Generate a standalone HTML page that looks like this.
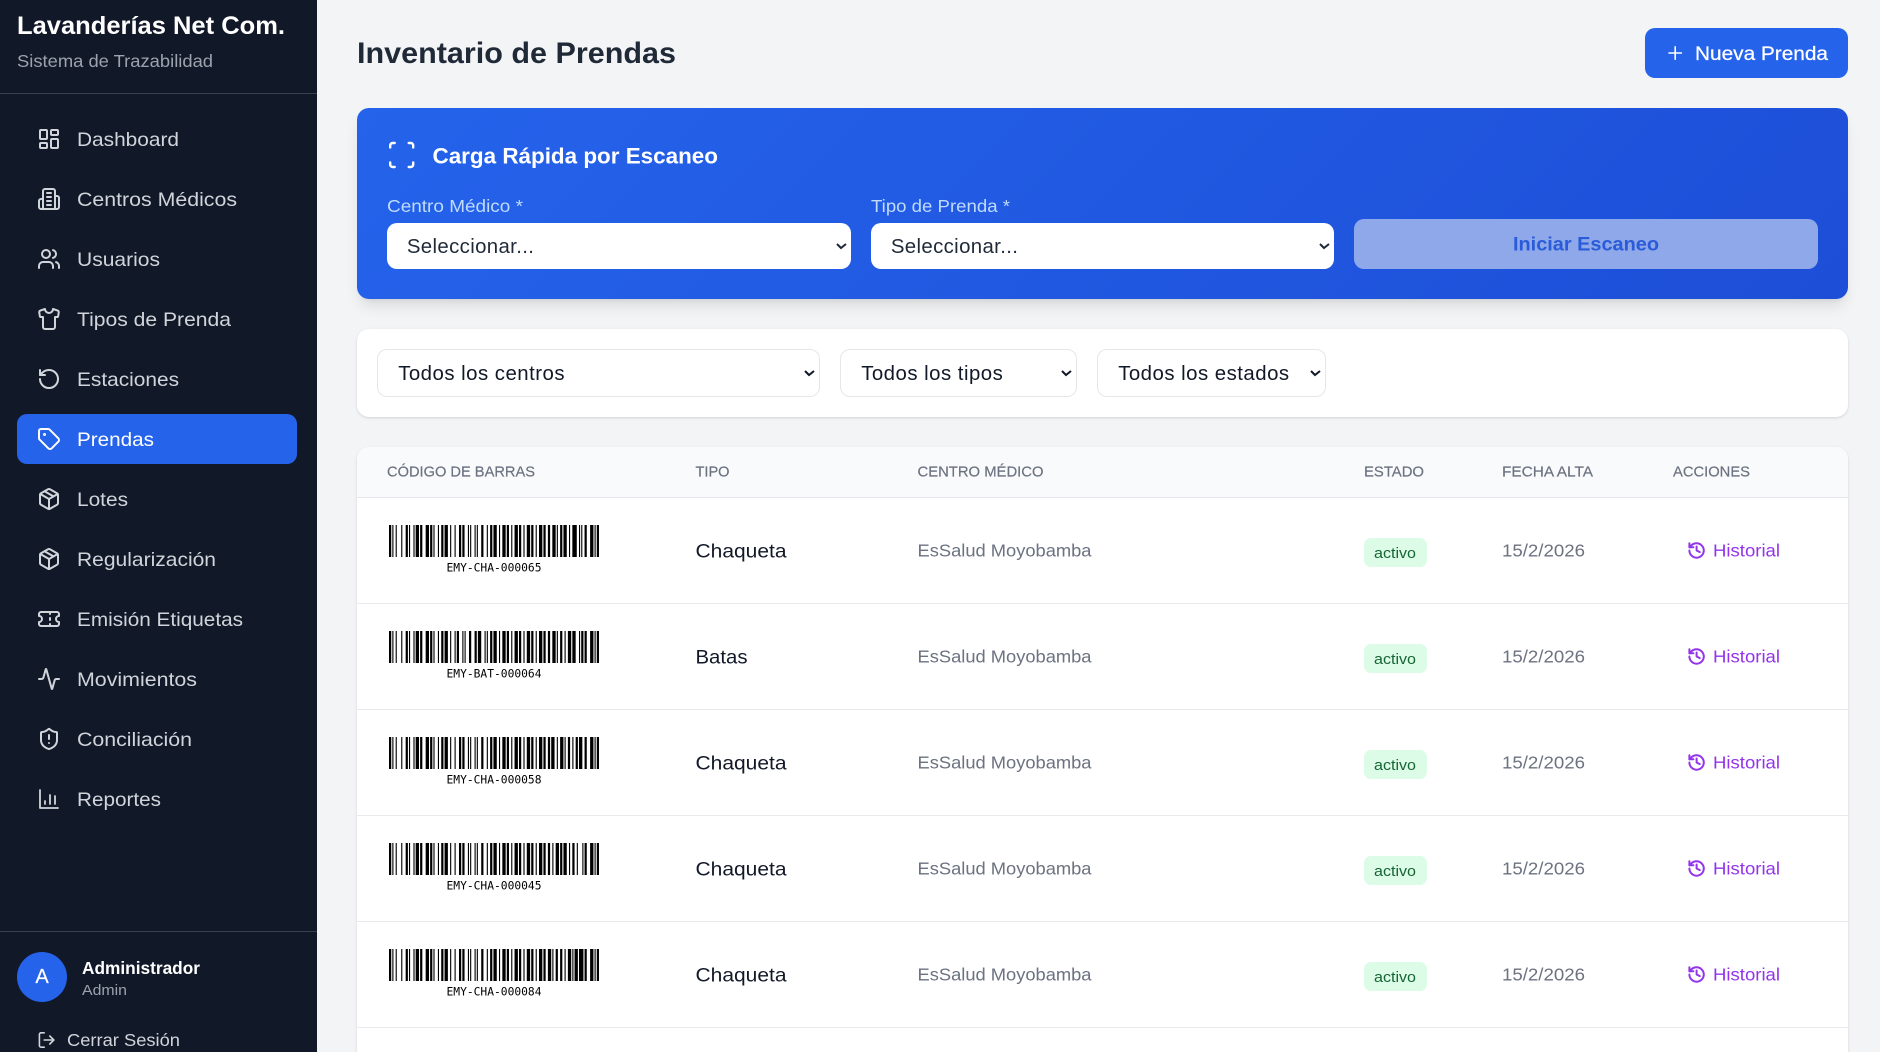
<!DOCTYPE html>
<html lang="es">
<head>
<meta charset="utf-8">
<title>Inventario de Prendas</title>
<style>
html,body{margin:0;padding:0;width:1880px;height:1052px;overflow:hidden}
body{background:#f3f4f6;font-family:"Liberation Sans",sans-serif}
#root{position:relative;width:1880px;height:1052px;overflow:hidden;background:#f3f4f6}
.b{position:absolute;box-sizing:border-box}
select{position:absolute;box-sizing:border-box;background-color:#fff;font-family:"Liberation Sans",sans-serif;font-size:17px;margin:0;zoom:1.2}
.s1{border:0;border-radius:8.33px;height:38.33px;top:185.83px;padding:1px 0 0 13.2px;color:#1f2937;letter-spacing:.3px}
.s2{border:1px solid #e5e7eb;border-radius:8.33px;height:40px;top:290.83px;padding:1px 0 0 13.5px;color:#111827;letter-spacing:.4px}
svg.o{position:absolute;left:0;top:0}
text{font-family:"Liberation Sans",sans-serif}
.n{font-size:19.8px;fill:#d1d5db}
.i{fill:none;stroke:#d1d5db;stroke-width:2;stroke-linecap:round;stroke-linejoin:round}
.th{font-size:15px;fill:#6b7280;stroke:#6b7280;stroke-width:.2}
.ty{font-size:19.8px;fill:#111827}
.ce{font-size:17.4px;fill:#6b7280}
.ac{font-size:15px;fill:#166534}
.hi{font-size:17.4px;fill:#9333ea}
.bc{font-family:"DejaVu Sans Mono",monospace;font-size:11.3px;fill:#000}
.h{fill:none;stroke:#9333ea;stroke-width:2.5;stroke-linecap:round;stroke-linejoin:round}
</style>
</head>
<body>
<div id="root">
<div class="b" style="left:0;top:0;width:317px;height:1052px;background:#111827"></div>
<div class="b" style="left:0;top:93px;width:317px;height:1px;background:#374151"></div>
<div class="b" style="left:0;top:931px;width:317px;height:1px;background:#374151"></div>
<div class="b" style="left:17px;top:414px;width:280px;height:50px;background:#2563eb;border-radius:10px"></div>
<div class="b" style="left:17px;top:952px;width:50px;height:50px;background:#2563eb;border-radius:50%"></div>

<div class="b" style="left:1645px;top:28px;width:203px;height:50px;background:#2563eb;border-radius:10px"></div>
<div class="b" style="left:357px;top:108px;width:1491px;height:191px;background:linear-gradient(135deg,#2563eb,#1d4ed8);border-radius:12px;box-shadow:0 10px 15px -3px rgba(0,0,0,.1),0 4px 6px -4px rgba(0,0,0,.1)"></div>
<select class="s1" style="left:322.5px;width:386.67px"><option>Seleccionar...</option></select>
<select class="s1" style="left:725.83px;width:385.83px"><option>Seleccionar...</option></select>
<div class="b" style="left:1354px;top:219px;width:464px;height:50px;background:#8fa8ea;border-radius:10px"></div>

<div class="b" style="left:357px;top:329px;width:1491px;height:88px;background:#fff;border-radius:12px;box-shadow:0 1px 3px rgba(0,0,0,.1),0 1px 2px -1px rgba(0,0,0,.1)"></div>
<select class="s2" style="left:314.17px;width:369.17px"><option>Todos los centros</option></select>
<select class="s2" style="left:700px;width:197.5px"><option>Todos los tipos</option></select>
<select class="s2" style="left:914.17px;width:190.83px"><option>Todos los estados</option></select>

<div class="b" style="left:357px;top:447px;width:1491px;height:640px;background:#fff;border-radius:12px;box-shadow:0 1px 3px rgba(0,0,0,.1),0 1px 2px -1px rgba(0,0,0,.1);overflow:hidden">
  <div class="b" style="left:0;top:0;width:100%;height:51px;background:#f9fafb;border-bottom:1.2px solid #e5e7eb"></div>
  <div class="b" style="left:0;top:156px;width:100%;height:1px;background:#e8eaed"></div>
  <div class="b" style="left:0;top:262px;width:100%;height:1px;background:#e8eaed"></div>
  <div class="b" style="left:0;top:368px;width:100%;height:1px;background:#e8eaed"></div>
  <div class="b" style="left:0;top:474px;width:100%;height:1px;background:#e8eaed"></div>
  <div class="b" style="left:0;top:580px;width:100%;height:1px;background:#e8eaed"></div>
</div>
<div class="b" style="left:1364px;top:538px;width:63px;height:29px;background:#dcfce7;border-radius:7px"></div>
<div class="b" style="left:1364px;top:644px;width:63px;height:29px;background:#dcfce7;border-radius:7px"></div>
<div class="b" style="left:1364px;top:750px;width:63px;height:29px;background:#dcfce7;border-radius:7px"></div>
<div class="b" style="left:1364px;top:856px;width:63px;height:29px;background:#dcfce7;border-radius:7px"></div>
<div class="b" style="left:1364px;top:962px;width:63px;height:29px;background:#dcfce7;border-radius:7px"></div>

<svg class="o" width="1880" height="1052" viewBox="0 0 1880 1052" style="pointer-events:none">
<defs>
<g id="history"><path class="h" d="M3 12a9 9 0 1 0 9-9 9.75 9.75 0 0 0-6.74 2.74L3 8"/><path class="h" d="M3 3v5h5"/><path class="h" d="M12 7v5l4 2"/></g>
<g id="package"><path d="M11 21.73a2 2 0 0 0 2 0l7-4A2 2 0 0 0 21 16V8a2 2 0 0 0-1-1.73l-7-4a2 2 0 0 0-2 0l-7 4A2 2 0 0 0 3 8v8a2 2 0 0 0 1 1.73z"/><path d="M12 22V12"/><path d="m3.3 7 8.7 5 8.7-5"/><path d="m7.5 4.27 9 5.15"/></g>
</defs>

<text x="17" y="34" font-size="25" font-weight="700" fill="#fff" textLength="268" lengthAdjust="spacingAndGlyphs">Lavanderías Net Com.</text>
<text x="17" y="67" font-size="17.3" fill="#9ca3af" textLength="196" lengthAdjust="spacingAndGlyphs">Sistema de Trazabilidad</text>

<g class="i" transform="translate(37 127)"><rect x="3" y="3" width="7" height="9" rx="1"/><rect x="14" y="3" width="7" height="5" rx="1"/><rect x="14" y="12" width="7" height="9" rx="1"/><rect x="3" y="16" width="7" height="5" rx="1"/></g>
<text class="n" x="77" y="146" textLength="102" lengthAdjust="spacingAndGlyphs">Dashboard</text>
<g class="i" transform="translate(37 187)"><path d="M6 22V4a2 2 0 0 1 2-2h8a2 2 0 0 1 2 2v18Z"/><path d="M6 12H4a2 2 0 0 0-2 2v6a2 2 0 0 0 2 2h2"/><path d="M18 9h2a2 2 0 0 1 2 2v9a2 2 0 0 1-2 2h-2"/><path d="M10 6h4"/><path d="M10 10h4"/><path d="M10 14h4"/><path d="M10 18h4"/></g>
<text class="n" x="77" y="206" textLength="160" lengthAdjust="spacingAndGlyphs">Centros Médicos</text>
<g class="i" transform="translate(37 247)"><path d="M16 21v-2a4 4 0 0 0-4-4H6a4 4 0 0 0-4 4v2"/><circle cx="9" cy="7" r="4"/><path d="M22 21v-2a4 4 0 0 0-3-3.87"/><path d="M16 3.13a4 4 0 0 1 0 7.75"/></g>
<text class="n" x="77" y="266" textLength="83" lengthAdjust="spacingAndGlyphs">Usuarios</text>
<g class="i" transform="translate(37 307)"><path d="M20.38 3.46 16 2a4 4 0 0 1-8 0L3.62 3.46a2 2 0 0 0-1.34 2.23l.58 3.47a1 1 0 0 0 .99.84H6v10c0 1.1.9 2 2 2h8a2 2 0 0 0 2-2V10h2.15a1 1 0 0 0 .99-.84l.58-3.47a2 2 0 0 0-1.34-2.23z"/></g>
<text class="n" x="77" y="326" textLength="154" lengthAdjust="spacingAndGlyphs">Tipos de Prenda</text>
<g class="i" transform="translate(37 367)"><path d="M3 12a9 9 0 1 0 9-9 9.75 9.75 0 0 0-6.74 2.74L3 8"/><path d="M3 3v5h5"/></g>
<text class="n" x="77" y="386" textLength="102" lengthAdjust="spacingAndGlyphs">Estaciones</text>
<g class="i" style="stroke:#fff" transform="translate(37 427)"><path d="M12.586 2.586A2 2 0 0 0 11.172 2H4a2 2 0 0 0-2 2v7.172a2 2 0 0 0 .586 1.414l8.704 8.704a2.426 2.426 0 0 0 3.42 0l6.58-6.58a2.426 2.426 0 0 0 0-3.42z"/><circle cx="7.5" cy="7.5" r=".5" fill="#fff"/></g>
<text class="n" style="fill:#fff" x="77" y="446" textLength="77" lengthAdjust="spacingAndGlyphs">Prendas</text>
<use href="#package" class="i" transform="translate(37 487)"/>
<text class="n" x="77" y="506" textLength="51" lengthAdjust="spacingAndGlyphs">Lotes</text>
<use href="#package" class="i" transform="translate(37 547)"/>
<text class="n" x="77" y="566" textLength="139" lengthAdjust="spacingAndGlyphs">Regularización</text>
<g class="i" transform="translate(37 607)"><path d="M2 9a3 3 0 0 1 0 6v2a2 2 0 0 0 2 2h16a2 2 0 0 0 2-2v-2a3 3 0 0 1 0-6V7a2 2 0 0 0-2-2H4a2 2 0 0 0-2 2Z"/><path d="M13 5v2"/><path d="M13 17v2"/><path d="M13 11v2"/></g>
<text class="n" x="77" y="626" textLength="166" lengthAdjust="spacingAndGlyphs">Emisión Etiquetas</text>
<g class="i" transform="translate(37 667)"><path d="M22 12h-2.48a2 2 0 0 0-1.93 1.46l-2.35 8.36a.25.25 0 0 1-.48 0L9.24 2.18a.25.25 0 0 0-.48 0l-2.35 8.36A2 2 0 0 1 4.49 12H2"/></g>
<text class="n" x="77" y="686" textLength="120" lengthAdjust="spacingAndGlyphs">Movimientos</text>
<g class="i" transform="translate(37 727)"><path d="M20 13c0 5-3.5 7.5-7.66 8.95a1 1 0 0 1-.67-.01C7.5 20.5 4 18 4 13V6a1 1 0 0 1 1-1c2 0 4.5-1.2 6.24-2.72a1.17 1.17 0 0 1 1.52 0C14.51 3.81 17 5 19 5a1 1 0 0 1 1 1z"/><path d="M12 8v4"/><path d="M12 16h.01"/></g>
<text class="n" x="77" y="746" textLength="115" lengthAdjust="spacingAndGlyphs">Conciliación</text>
<g class="i" style="stroke-width:1.8" transform="translate(37 787)"><path d="M3 3v18h18"/><path d="M8 17v-3"/><path d="M13 17V8"/><path d="M18 17V9"/></g>
<text class="n" x="77" y="806" textLength="84" lengthAdjust="spacingAndGlyphs">Reportes</text>

<text x="42" y="983" text-anchor="middle" font-size="20" fill="#fff" stroke="#fff" stroke-width=".2">A</text>
<text x="82" y="974" font-size="17.4" font-weight="700" fill="#fff" textLength="118" lengthAdjust="spacingAndGlyphs">Administrador</text>
<text x="82" y="995" font-size="15" fill="#9ca3af" textLength="45" lengthAdjust="spacingAndGlyphs">Admin</text>
<g class="i" transform="translate(37 1030.4) scale(.8)"><path d="M9 21H5a2 2 0 0 1-2-2V5a2 2 0 0 1 2-2h4"/><path d="m16 17 5-5-5-5"/><path d="M21 12H9"/></g>
<text x="67" y="1046" font-size="17.4" fill="#d1d5db" textLength="113" lengthAdjust="spacingAndGlyphs">Cerrar Sesión</text>

<text x="357" y="63" font-size="29.5" font-weight="700" fill="#1f2937" textLength="319" lengthAdjust="spacingAndGlyphs">Inventario de Prendas</text>
<g fill="none" stroke="#fff" stroke-width="1.6" stroke-linecap="round"><path d="M1669 53h12.4"/><path d="M1675.2 46.8v12.4"/></g>
<text x="1695" y="60" font-size="19.8" fill="#fff" stroke="#fff" stroke-width=".25" textLength="133" lengthAdjust="spacingAndGlyphs">Nueva Prenda</text>

<g fill="none" stroke="#fff" stroke-width="2.4" stroke-linecap="round" stroke-linejoin="round"><path d="M390.2 147.5v-2.1a2.4 2.4 0 0 1 2.4-2.4h2.1"/><path d="M408.7 143h2.1a2.4 2.4 0 0 1 2.4 2.4v2.1"/><path d="M413.2 162.5v2.1a2.4 2.4 0 0 1-2.4 2.4h-2.1"/><path d="M394.7 167h-2.1a2.4 2.4 0 0 1-2.4-2.4v-2.1"/></g>
<text x="432.5" y="163.5" font-size="22.4" font-weight="700" fill="#fff" textLength="285.5" lengthAdjust="spacingAndGlyphs">Carga Rápida por Escaneo</text>
<text x="387" y="212" font-size="17.4" fill="#bfdbfe" textLength="136" lengthAdjust="spacingAndGlyphs">Centro Médico *</text>
<text x="871" y="212" font-size="17.4" fill="#bfdbfe" textLength="139" lengthAdjust="spacingAndGlyphs">Tipo de Prenda *</text>
<text x="1513" y="250.5" font-size="19.8" font-weight="700" fill="#2a5bd8" textLength="146" lengthAdjust="spacingAndGlyphs">Iniciar Escaneo</text>

<text class="th" x="387" y="476.5" textLength="148" lengthAdjust="spacingAndGlyphs">CÓDIGO DE BARRAS</text>
<text class="th" x="695.5" y="476.5" textLength="34" lengthAdjust="spacingAndGlyphs">TIPO</text>
<text class="th" x="917.5" y="476.5" textLength="126" lengthAdjust="spacingAndGlyphs">CENTRO MÉDICO</text>
<text class="th" x="1364" y="476.5" textLength="60" lengthAdjust="spacingAndGlyphs">ESTADO</text>
<text class="th" x="1502" y="476.5" textLength="91" lengthAdjust="spacingAndGlyphs">FECHA ALTA</text>
<text class="th" x="1673" y="476.5" textLength="77" lengthAdjust="spacingAndGlyphs">ACCIONES</text>

<!-- Row 1 -->
<g transform="translate(389 525) scale(1.1111 32)"><line x1="0" y1=".5" x2="189" y2=".5" stroke="#000" stroke-width="1" stroke-dasharray="2 1 1 2 1 4 1 3 2 1 1 3 1 1 3 1 2 3 3 1 2 1 1 3 1 2 2 1 3 2 1 3 1 3 2 1 2 3 1 1 1 3 1 1 1 3 2 3 1 2 2 1 3 2 1 2 3 1 2 2 1 2 3 1 2 2 1 2 3 1 2 2 1 2 3 1 2 2 2 2 3 1 1 2 2 1 3 2 1 2 4 2 1 1 1 2 2 3 3 1 1 1 2"/></g>
<text class="bc" x="446.5" y="571.5" textLength="95" lengthAdjust="spacingAndGlyphs">EMY-CHA-000065</text>
<text class="ty" x="695.5" y="557.5" textLength="91" lengthAdjust="spacingAndGlyphs">Chaqueta</text>
<text class="ce" x="917.5" y="556.5" textLength="174" lengthAdjust="spacingAndGlyphs">EsSalud Moyobamba</text>
<text class="ac" x="1374" y="558" textLength="42" lengthAdjust="spacingAndGlyphs">activo</text>
<text class="ce" x="1502" y="556.5" textLength="83" lengthAdjust="spacingAndGlyphs">15/2/2026</text>
<use href="#history" transform="translate(1687 540.9) scale(.8)"/>
<text class="hi" x="1713" y="556.5" textLength="67" lengthAdjust="spacingAndGlyphs">Historial</text>

<!-- Row 2 -->
<g transform="translate(389 631) scale(1.1111 32)"><line x1="0" y1=".5" x2="189" y2=".5" stroke="#000" stroke-width="1" stroke-dasharray="2 1 1 2 1 4 1 3 2 1 1 3 1 1 3 1 2 3 3 1 2 1 1 3 1 2 2 1 3 2 1 3 1 1 2 3 1 1 1 3 2 3 2 1 3 3 1 1 1 2 2 1 3 2 1 2 3 1 2 2 1 2 3 1 2 2 1 2 3 1 2 2 1 2 3 1 2 2 2 2 3 1 1 2 2 2 1 2 3 1 3 3 1 1 2 1 2 3 3 1 1 1 2"/></g>
<text class="bc" x="446.5" y="677.5" textLength="95" lengthAdjust="spacingAndGlyphs">EMY-BAT-000064</text>
<text class="ty" x="695.5" y="663.5" textLength="52" lengthAdjust="spacingAndGlyphs">Batas</text>
<text class="ce" x="917.5" y="662.5" textLength="174" lengthAdjust="spacingAndGlyphs">EsSalud Moyobamba</text>
<text class="ac" x="1374" y="664" textLength="42" lengthAdjust="spacingAndGlyphs">activo</text>
<text class="ce" x="1502" y="662.5" textLength="83" lengthAdjust="spacingAndGlyphs">15/2/2026</text>
<use href="#history" transform="translate(1687 646.9) scale(.8)"/>
<text class="hi" x="1713" y="662.5" textLength="67" lengthAdjust="spacingAndGlyphs">Historial</text>

<!-- Row 3 -->
<g transform="translate(389 737) scale(1.1111 32)"><line x1="0" y1=".5" x2="189" y2=".5" stroke="#000" stroke-width="1" stroke-dasharray="2 1 1 2 1 4 1 3 2 1 1 3 1 1 3 1 2 3 3 1 2 1 1 3 1 2 2 1 3 2 1 3 1 3 2 1 2 3 1 1 1 3 1 1 1 3 2 3 1 2 2 1 3 2 1 2 3 1 2 2 1 2 3 1 2 2 1 2 3 1 2 2 1 2 3 1 2 2 2 1 3 2 1 2 3 1 1 2 2 2 1 2 2 1 3 2 2 3 3 1 1 1 2"/></g>
<text class="bc" x="446.5" y="783.5" textLength="95" lengthAdjust="spacingAndGlyphs">EMY-CHA-000058</text>
<text class="ty" x="695.5" y="769.5" textLength="91" lengthAdjust="spacingAndGlyphs">Chaqueta</text>
<text class="ce" x="917.5" y="768.5" textLength="174" lengthAdjust="spacingAndGlyphs">EsSalud Moyobamba</text>
<text class="ac" x="1374" y="770" textLength="42" lengthAdjust="spacingAndGlyphs">activo</text>
<text class="ce" x="1502" y="768.5" textLength="83" lengthAdjust="spacingAndGlyphs">15/2/2026</text>
<use href="#history" transform="translate(1687 752.9) scale(.8)"/>
<text class="hi" x="1713" y="768.5" textLength="67" lengthAdjust="spacingAndGlyphs">Historial</text>

<!-- Row 4 -->
<g transform="translate(389 843) scale(1.1111 32)"><line x1="0" y1=".5" x2="189" y2=".5" stroke="#000" stroke-width="1" stroke-dasharray="2 1 1 2 1 4 1 3 2 1 1 3 1 1 3 1 2 3 3 1 2 1 1 3 1 2 2 1 3 2 1 3 1 3 2 1 2 3 1 1 1 3 1 1 1 3 2 3 1 2 2 1 3 2 1 2 3 1 2 2 1 2 3 1 2 2 1 2 3 1 2 2 1 2 3 1 2 2 2 2 1 2 3 1 2 1 3 2 1 2 2 2 1 4 1 1 2 3 3 1 1 1 2"/></g>
<text class="bc" x="446.5" y="889.5" textLength="95" lengthAdjust="spacingAndGlyphs">EMY-CHA-000045</text>
<text class="ty" x="695.5" y="875.5" textLength="91" lengthAdjust="spacingAndGlyphs">Chaqueta</text>
<text class="ce" x="917.5" y="874.5" textLength="174" lengthAdjust="spacingAndGlyphs">EsSalud Moyobamba</text>
<text class="ac" x="1374" y="876" textLength="42" lengthAdjust="spacingAndGlyphs">activo</text>
<text class="ce" x="1502" y="874.5" textLength="83" lengthAdjust="spacingAndGlyphs">15/2/2026</text>
<use href="#history" transform="translate(1687 858.9) scale(.8)"/>
<text class="hi" x="1713" y="874.5" textLength="67" lengthAdjust="spacingAndGlyphs">Historial</text>

<!-- Row 5 -->
<g transform="translate(389 949) scale(1.1111 32)"><line x1="0" y1=".5" x2="189" y2=".5" stroke="#000" stroke-width="1" stroke-dasharray="2 1 1 2 1 4 1 3 2 1 1 3 1 1 3 1 2 3 3 1 2 1 1 3 1 2 2 1 3 2 1 3 1 3 2 1 2 3 1 1 1 3 1 1 1 3 2 3 1 2 2 1 3 2 1 2 3 1 2 2 1 2 3 1 2 2 1 2 3 1 2 2 1 2 3 1 2 2 3 1 1 2 2 2 2 2 1 2 3 1 1 1 3 1 4 1 2 3 3 1 1 1 2"/></g>
<text class="bc" x="446.5" y="995.5" textLength="95" lengthAdjust="spacingAndGlyphs">EMY-CHA-000084</text>
<text class="ty" x="695.5" y="981.5" textLength="91" lengthAdjust="spacingAndGlyphs">Chaqueta</text>
<text class="ce" x="917.5" y="980.5" textLength="174" lengthAdjust="spacingAndGlyphs">EsSalud Moyobamba</text>
<text class="ac" x="1374" y="982" textLength="42" lengthAdjust="spacingAndGlyphs">activo</text>
<text class="ce" x="1502" y="980.5" textLength="83" lengthAdjust="spacingAndGlyphs">15/2/2026</text>
<use href="#history" transform="translate(1687 964.9) scale(.8)"/>
<text class="hi" x="1713" y="980.5" textLength="67" lengthAdjust="spacingAndGlyphs">Historial</text>
</svg>
</div>
</body>
</html>
